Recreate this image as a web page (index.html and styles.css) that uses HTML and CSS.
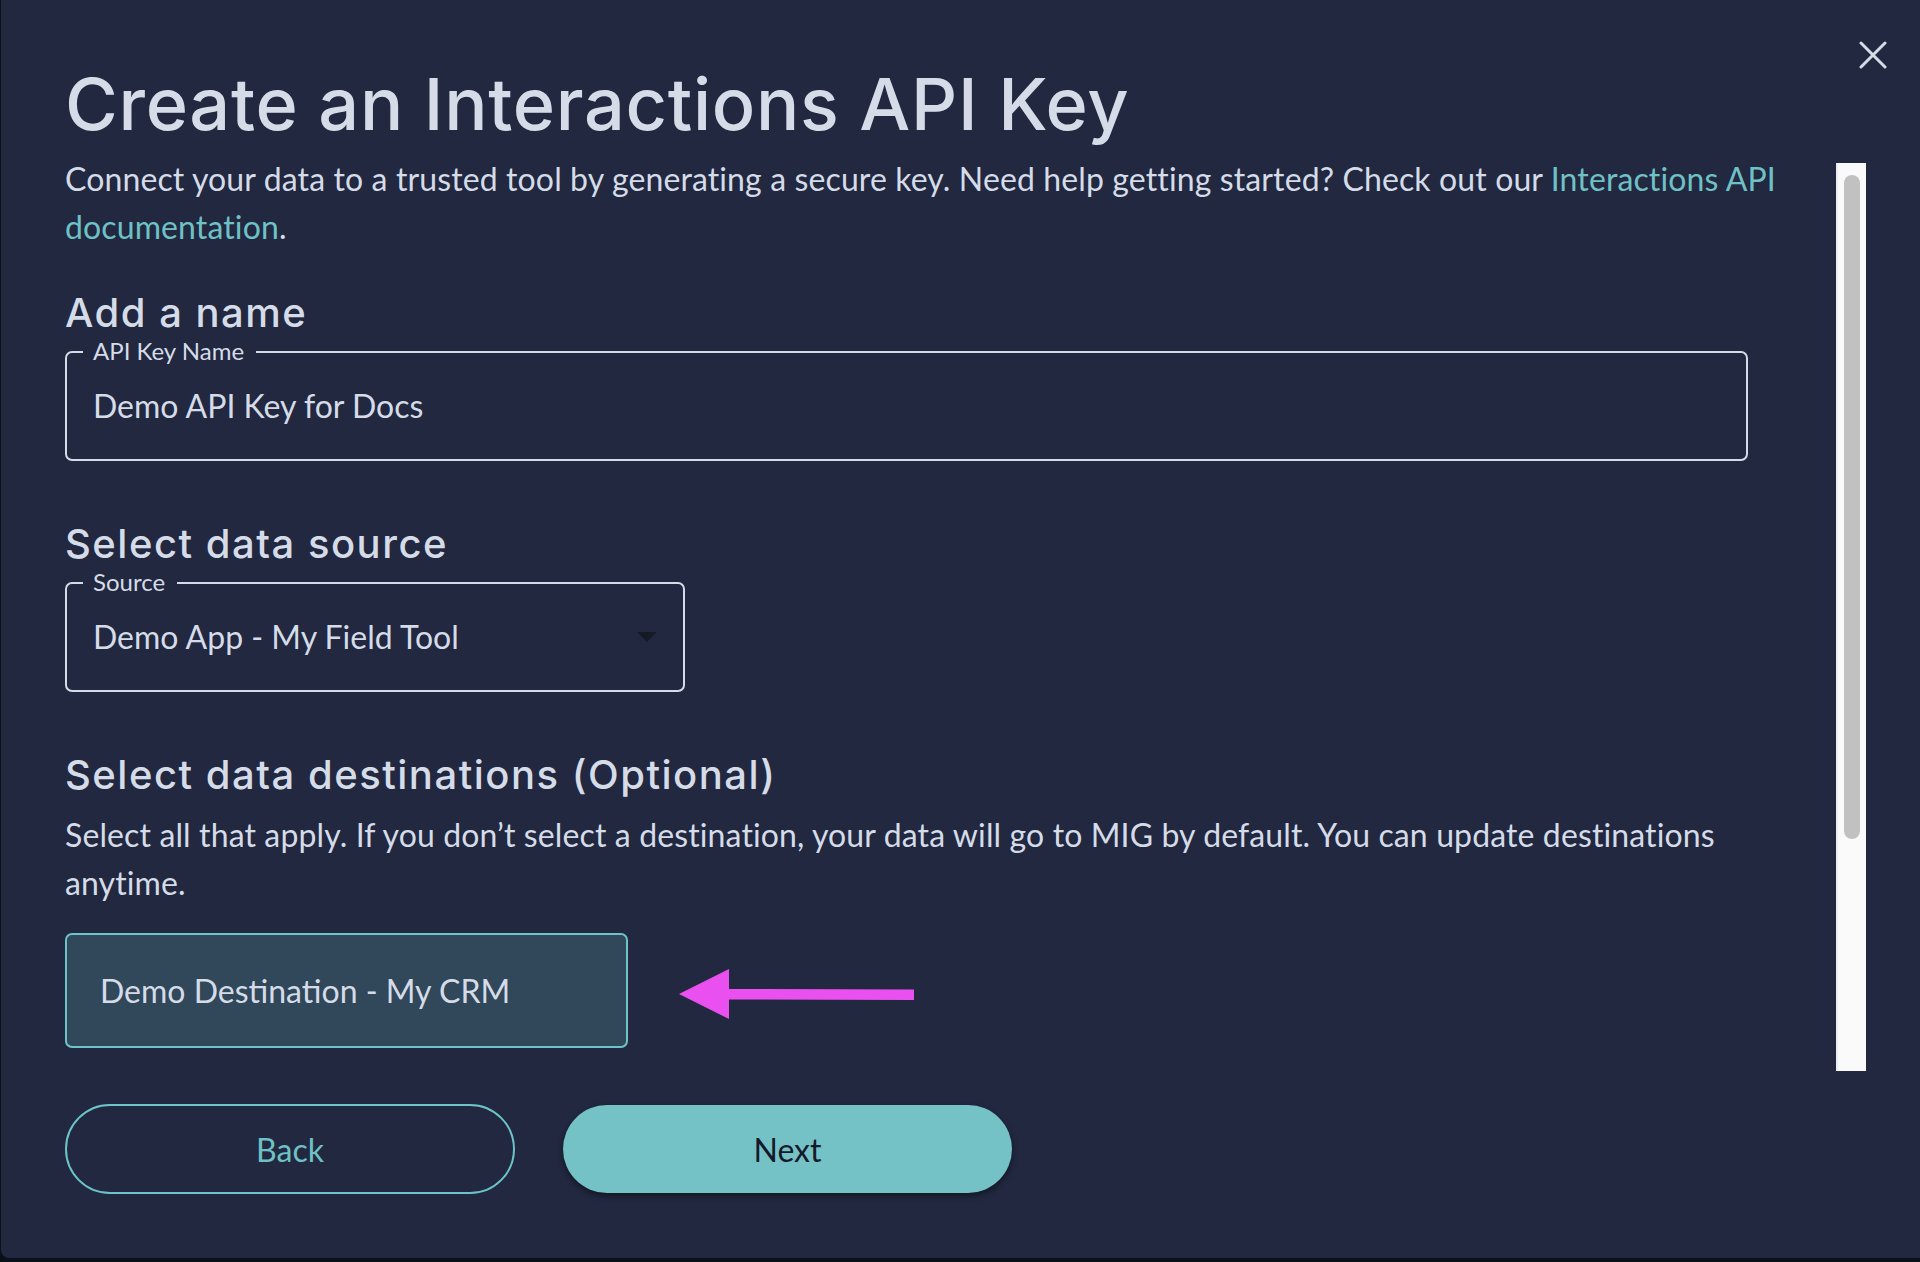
FILE: index.html
```html
<!DOCTYPE html>
<html lang="en">
<head>
<meta charset="utf-8">
<title>Create an Interactions API Key</title>
<link rel="stylesheet" href="styles.css">
</head>
<body>
<div class="modal">
  <button class="close" aria-label="Close">
    <svg width="28" height="28" viewBox="0 0 28 28"><path d="M2 2 L26 26 M26 2 L2 26" stroke="#d5dce8" stroke-width="3" stroke-linecap="round" fill="none"/></svg>
  </button>
  <h1 class="title">Create an Interactions API Key</h1>
  <div class="main">
    <div class="content">
      <p class="text">Connect your data to a trusted tool by generating a secure key. Need help getting started? Check out our <a class="link" href="#">Interactions API</a><br><a class="link" href="#">documentation</a>.</p>

      <h2 class="heading first">Add a name</h2>
      <div class="field wide">
        <span class="legend">API Key Name</span>
        <span class="value">Demo API Key for Docs</span>
      </div>

      <h2 class="heading">Select data source</h2>
      <div class="field select">
        <span class="legend">Source</span>
        <span class="value">Demo App - My Field Tool</span>
        <svg class="caret" width="20" height="10" viewBox="0 0 20 10"><path d="M0 0 L20 0 L10 10 Z" fill="#151a27"/></svg>
      </div>

      <h2 class="heading">Select data destinations (Optional)</h2>
      <p class="text">Select all that apply. If you don’t select a destination, your data will go to MIG by default. You can update destinations anytime.</p>
      <div class="dest-row">
        <div class="dest">Demo Destination - My CRM</div>
        <svg class="arrow" width="236" height="52" viewBox="0 0 236 52"><path d="M0 25 L50 0 L50 20 L235 20.5 L235 31 L50 30.5 L50 50 Z" fill="#ea50f0"/></svg>
      </div>
    </div>
    <div class="scrollbar"><div class="thumb"></div></div>
  </div>
  <div class="actions">
    <button class="btn back">Back</button>
    <button class="btn next">Next</button>
  </div>
</div>
</body>
</html>
```
FILE: styles.css
```css
html, body {
  margin: 0;
  padding: 0;
  background: #0b1018;
}
body {
  width: 1920px;
  height: 1262px;
  overflow: hidden;
  font-family: "Lato", "Liberation Sans", sans-serif;
}
.modal {
  position: relative;
  box-sizing: border-box;
  margin-left: 1px;
  height: 1258px;
  background: #212840;
  border-bottom-left-radius: 8px;
  padding: 68px 0 0 64px;
  color: #d5dce8;
}
.close {
  position: absolute;
  top: 41px;
  right: 33px;
  width: 28px;
  height: 28px;
  padding: 0;
  border: 0;
  background: none;
}
.close svg { display: block; }
.title {
  margin: 0;
  font-family: "Inter", "Noto Sans", sans-serif;
  font-weight: 500;
  font-size: 72px;
  line-height: 72px;
  letter-spacing: 0.7px;
  color: #d5dce8;
}
.main {
  display: flex;
  align-items: flex-start;
  margin-top: 15px;
}
.content {
  width: 1731px;
}
.text {
  margin: 0;
  font-size: 32px;
  line-height: 48px;
  letter-spacing: 0.12px;
  color: #d5dce8;
}
.link {
  color: #6fc1c5;
  text-decoration: none;
}
.heading {
  margin: 59px 0 0 0;
  font-family: "Inter", "Noto Sans", sans-serif;
  font-weight: 500;
  font-size: 40px;
  line-height: 48px;
  letter-spacing: 1.5px;
  color: #d5dce8;
}
.heading.first { margin-top: 38px; }
.text + .dest-row { margin-top: 26px; }
.heading + .text { margin-top: 12px; }
.field {
  position: relative;
  box-sizing: border-box;
  height: 110px;
  margin-top: 14px;
  border: 2px solid #d5dce8;
  border-radius: 7px;
  display: flex;
  align-items: center;
  padding: 0 26px;
}
.field.wide { width: 1683px; }
.field.select { width: 620px; justify-content: space-between; }
.legend {
  position: absolute;
  top: -17px;
  left: 16px;
  padding: 0 12px 0 10px;
  background: #212840;
  font-size: 24px;
  line-height: 30px;
  color: #d5dce8;
}
.value {
  font-size: 32px;
  line-height: 38px;
  color: #d5dce8;
}
.caret { display: block; }
.dest-row {
  display: flex;
  align-items: center;
}
.dest {
  box-sizing: border-box;
  width: 563px;
  height: 115px;
  background: #31475a;
  border: 2px solid #6cc4c8;
  border-radius: 7px;
  display: flex;
  align-items: center;
  padding-left: 33px;
  font-size: 32px;
  color: #d5dce8;
}
.arrow {
  display: block;
  margin-left: 51px;
  margin-top: 8px;
}
.scrollbar {
  box-sizing: border-box;
  width: 30px;
  height: 908px;
  margin-left: 40px;
  margin-top: 8px;
  background: #fafafa;
  border-left: 2px solid #ededed;
  padding: 12px 0 0 6px;
}
.thumb {
  width: 16px;
  height: 664px;
  border-radius: 8px;
  background: #c1c1c1;
}
.actions {
  position: absolute;
  left: 64px;
  top: 1104px;
  display: flex;
  align-items: center;
  gap: 48px;
}
.btn {
  box-sizing: border-box;
  width: 450px;
  height: 90px;
  border-radius: 45px;
  font-family: "Lato", "Liberation Sans", sans-serif;
  font-size: 32px;
  cursor: pointer;
}
.back {
  background: transparent;
  border: 2px solid #6cc4c8;
  color: #6fc1c5;
}
.next {
  width: 449px;
  height: 88px;
  border: 0;
  background: #74c2c5;
  color: #141a2b;
  box-shadow: 0 3px 6px rgba(0,0,0,0.45);
}
```
